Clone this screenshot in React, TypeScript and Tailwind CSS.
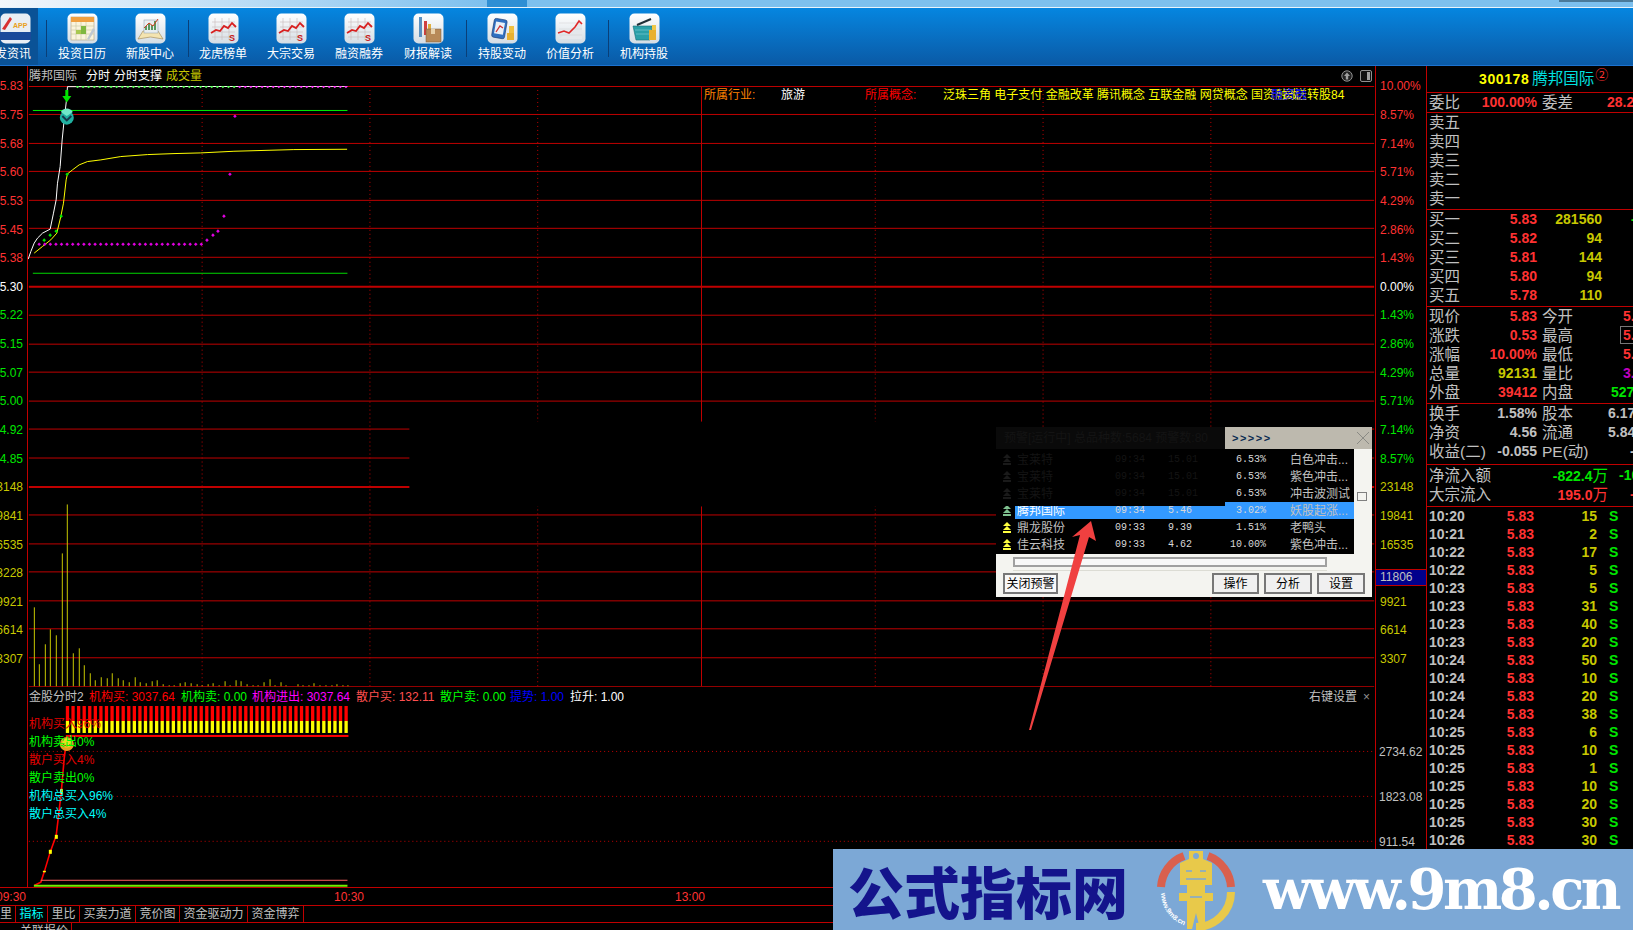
const RED = "#c00000";

const priceLine = [[82,568],[90,545],[100,520],[110,505],[125,490],[148,478],[158,430],[166,390],[170,340],[178,290],[184,210],[190,150],[197,90],[200,50],[1040,49]];
const avgLine = [[100,550],[125,530],[150,510],[168,490],[180,440],[188,400],[196,330],[200,312],[215,300],[235,285],[260,275],[300,270],[360,260],[440,254],[520,251],[600,249],[700,244],[880,239],[1040,238]];
const volBars = [[100,384],[115,555],[133,495],[148,450],[166,468],[184,222],[199,75],[217,522],[235,507],[250,558],[268,582],[283,603],[301,594],[319,597],[334,582],[352,597],[367,603],[385,609],[403,594],[418,609],[436,612],[454,606],[469,603],[487,615],[503,618],[520,618],[538,612],[553,609],[571,612],[589,615],[604,618],[622,615],[637,612],[655,618],[673,606],[688,618],[706,603],[721,606],[739,615],[757,618],[772,618],[790,609],[808,600],[823,618],[841,609],[856,618],[892,615],[907,618],[925,618],[940,612],[958,618],[975,618],[992,618],[1009,615],[1027,618],[1042,618]];
const gridYs = [86.5,114.5,143.5,171.5,200.5,228.5,257.5,315.5,344.5,372.5,401.5,429.5,458.5,515.5,544.5,572.5,601.5,629.5,658.5,687.5];
const dottedXs = [201.5,369.5,537.5,875.5,1043.5,1211.5];
const pinkTail = [[619,511],[637,496],[652,484],[670,439],[688,313],[703,139]];
const greenDots = [[130,511],[148,496],[166,484],[181,439],[199,313]];
const indLine = [[100,620],[120,610],[130,580],[148,520],[166,470],[172,420],[180,350],[183,320],[190,240],[195,200]];

const toPts = (a: number[][]) => a.map(([x, y]) => `${x / 3},${y / 3 + 70}`).join(" ");

const leftAxis = [
  ["5.83","text-[#ff3232]"],["5.75","text-[#ff3232]"],["5.68","text-[#ff3232]"],["5.60","text-[#ff3232]"],["5.53","text-[#ff3232]"],["5.45","text-[#ff3232]"],["5.38","text-[#ff3232]"],
  ["5.30","text-white"],
  ["5.22","text-[#00e600]"],["5.15","text-[#00e600]"],["5.07","text-[#00e600]"],["5.00","text-[#00e600]"],["4.92","text-[#00e600]"],["4.85","text-[#00e600]"],
  ["23148","text-[#c8c800]"],["19841","text-[#c8c800]"],["16535","text-[#c8c800]"],["13228","text-[#c8c800]"],["9921","text-[#c8c800]"],["6614","text-[#c8c800]"],["3307","text-[#c8c800]"],
];
const rightAxis = [
  ["10.00%","text-[#ff3232]"],["8.57%","text-[#ff3232]"],["7.14%","text-[#ff3232]"],["5.71%","text-[#ff3232]"],["4.29%","text-[#ff3232]"],["2.86%","text-[#ff3232]"],["1.43%","text-[#ff3232]"],
  ["0.00%","text-white"],
  ["1.43%","text-[#00e600]"],["2.86%","text-[#00e600]"],["4.29%","text-[#00e600]"],["5.71%","text-[#00e600]"],["7.14%","text-[#00e600]"],["8.57%","text-[#00e600]"],
  ["23148","text-[#c8c800]"],["19841","text-[#c8c800]"],["16535","text-[#c8c800]"],["","text-[#c8c800]"],["9921","text-[#c8c800]"],["6614","text-[#c8c800]"],["3307","text-[#c8c800]"],
];

const ticks = [["10:20",15],["10:21",2],["10:22",17],["10:22",5],["10:23",5],["10:23",31],["10:23",40],["10:23",20],["10:24",50],["10:24",10],["10:24",20],["10:24",38],["10:25",6],["10:25",10],["10:25",1],["10:25",10],["10:25",20],["10:25",30],["10:26",30]];

function Tile({ children }: { children: React.ReactNode }) {
  return (
    <svg width="31" height="31" viewBox="0 0 31 31">
      <defs>
        <linearGradient id="tile" x1="0" y1="0" x2="0" y2="1">
          <stop offset="0" stopColor="#ffffff" />
          <stop offset="1" stopColor="#d4dde4" />
        </linearGradient>
      </defs>
      <rect x="0.5" y="0.5" width="30" height="30" rx="5" fill="url(#tile)" />
      {children}
    </svg>
  );
}

function ChartS() {
  return (
    <Tile>
      <g stroke="#c8b8b8" strokeWidth="0.6">
        <path d="M4 9H27M4 14H27M4 19H27M4 24H27M7 5V27M14 5V27M21 5V27" />
      </g>
      <path d="M3 20L8 17L12 18L16 13L20 15L24 10L28 14" fill="none" stroke="#d82020" strokeWidth="1.8" />
      <text x="21" y="28" fontSize="9" fontWeight="700" fill="#c81818" fontFamily="Liberation Sans">S</text>
    </Tile>
  );
}

const icons: Record<string, React.ReactNode> = {
  calendar: (
    <Tile>
      <rect x="4" y="4" width="23" height="23" fill="#fbf4dc" stroke="#b0a080" strokeWidth="0.6" />
      <rect x="4" y="4" width="23" height="5" fill="#f0a040" />
      <path d="M4 13H27M4 17H27M4 21H27M9 9V27M14 9V27M19 9V27" stroke="#c8c8a0" strokeWidth="0.6" />
      <rect x="14" y="13" width="5" height="8" fill="#80b840" />
      <rect x="9" y="17" width="5" height="4" fill="#a8c850" />
      <path d="M20 26L26 15L28 17L22 27Z" fill="#c0c8d0" />
    </Tile>
  ),
  book: (
    <Tile>
      <path d="M3 26L8 18H15.5L23 18L28 26L15.5 24Z" fill="#f4e4b0" stroke="#a89060" strokeWidth="0.7" />
      <rect x="9" y="7" width="14" height="13" fill="#e8eef0" stroke="#8898a8" strokeWidth="0.5" />
      <path d="M10 17V13H12V17ZM13 17V10H15V17ZM16 17V12H18V17ZM19 17V8H21V17Z" fill="#5a9860" />
      <path d="M9 15L14 10L18 13L23 6" fill="none" stroke="#d04020" strokeWidth="1" />
    </Tile>
  ),
  chart: <ChartS />,
  report: (
    <Tile>
      <rect x="6" y="4" width="3" height="20" fill="#5a90c0" />
      <rect x="11" y="8" width="3" height="14" fill="#d04040" />
      <rect x="15" y="11" width="3" height="8" fill="#e0b040" />
      <rect x="13" y="16" width="15" height="13" fill="#b88a58" stroke="#7a5a38" strokeWidth="0.5" />
      <rect x="18" y="16" width="4" height="5" fill="#e8d0a8" />
    </Tile>
  ),
  holding: (
    <Tile>
      <rect x="6" y="6" width="13" height="19" rx="2" transform="rotate(10 12 15)" fill="#3070c0" stroke="#183870" strokeWidth="0.6" />
      <rect x="8" y="9" width="9" height="12" transform="rotate(10 12 15)" fill="#e8f0f8" />
      <path d="M9 19L13 13L16 15" fill="none" stroke="#d03030" strokeWidth="1.3" />
      <rect x="20" y="20" width="7" height="7" fill="#e8b030" />
      <rect x="22" y="13" width="5" height="7" fill="#f0c040" />
    </Tile>
  ),
  value: (
    <Tile>
      <path d="M4 26H27V8L4 26Z" fill="#e4e8ec" />
      <path d="M4 22H27M4 16H27M4 10H27" stroke="#d0d0d0" strokeWidth="0.5" />
      <path d="M3 20L9 18L14 20L20 14L24 8L27 11" fill="none" stroke="#e02828" strokeWidth="1.6" />
    </Tile>
  ),
  basket: (
    <Tile>
      <path d="M4 13H23L21 27H7Z" fill="#2aa0a8" stroke="#157078" strokeWidth="0.6" />
      <path d="M8 12L22 6" stroke="#203038" strokeWidth="2" />
      <path d="M6 17H22M7 21H21" stroke="#88d0d8" strokeWidth="0.6" />
      <rect x="20" y="17" width="7" height="10" fill="#e8b030" />
      <rect x="23" y="12" width="4" height="5" fill="#f0c848" />
    </Tile>
  ),
};

function Dot({ x, y, fill }: { x: number; y: number; fill: string }) {
  return <path d={`M${x} ${y - 1.8}L${x + 1.8} ${y}L${x} ${y + 1.8}L${x - 1.8} ${y}Z`} fill={fill} />;
}

function ToolItem({ icon, label, className = "" }: { icon: string; label: string; className?: string }) {
  return (
    <div className={`flex flex-col items-center w-[68px] pt-[5px] ${className}`}>
      {icons[icon]}
      <div className="mt-[2px] h-[17px] leading-[17px] text-[12px] text-white whitespace-nowrap">{label}</div>
    </div>
  );
}

function Sep({ className = "" }: { className?: string }) {
  return <div className={`w-px h-[37px] mt-[12px] bg-[#0a3f78] ${className}`} />;
}

const cjkRow = "text-[15.5px] text-[#c0c0c0] leading-[19px]";
const numBold = "text-[14px] font-bold leading-[19px]";

function StatRow({ a, v, vc, b, w, wc, pad, boxed }: { a: string; v: string; vc: string; b: string; w: string; wc: string; pad: string; boxed?: boolean }) {
  return (
    <div className="flex h-[19px] items-center whitespace-nowrap">
      <div className={`w-[40px] shrink-0 ${cjkRow}`}>{a}</div>
      <div className={`w-[68px] shrink-0 text-right ${numBold} ${vc}`}>{v}</div>
      <div className={`ml-[5px] w-[31px] shrink-0 ${cjkRow}`}>{b}</div>
      <div className={`shrink-0 ${pad} ${numBold} ${wc}`}>
        {boxed ? <span className="border-l border-y border-[#777] pl-[2px] -ml-[3px] leading-[16px] inline-block">{w}</span> : w}
      </div>
    </div>
  );
}

function QuoteRow({ a, p, v, extra }: { a: string; p?: string; v?: string; extra?: boolean }) {
  return (
    <div className="flex h-[19px] items-center whitespace-nowrap">
      <div className={`w-[40px] shrink-0 ${cjkRow}`}>{a}</div>
      <div className={`w-[68px] shrink-0 text-right ${numBold} text-[#ff3232]`}>{p}</div>
      <div className={`w-[65px] shrink-0 text-right ${numBold} text-[#c8c800]`}>{v}</div>
      {extra && <div className={`pl-[29px] shrink-0 ${numBold} text-[#00e600]`}>-</div>}
    </div>
  );
}

function RightPanel() {
  return (
    <div className="w-[207px] shrink-0 flex flex-col overflow-hidden border-l border-[#c00000]">
      <div className="h-[27px] shrink-0 border-b border-[#c00000] flex items-center pl-[52px] whitespace-nowrap">
        <span className="text-[14px] font-bold text-[#ffff00] tracking-[0.6px]">300178</span>
        <span className="ml-[3px] text-[15.5px] text-[#00e0e0]">腾邦国际</span>
        <span className="ml-[1px] -mt-[8px] text-[13px] text-[#ff3232]">②</span>
      </div>
      <div className="h-[20px] shrink-0 border-b border-[#c00000] pl-[2px]">
        <StatRow a="委比" v="100.00%" vc="text-[#ff3232]" b="委差" w="28.2万" wc="text-[#ff3232]" pad="pl-[34px]" />
      </div>
      <div className="h-[97px] shrink-0 border-b border-[#c00000] pl-[2px]">
        {["卖五", "卖四", "卖三", "卖二", "卖一"].map((s) => (
          <QuoteRow key={s} a={s} />
        ))}
      </div>
      <div className="h-[97px] shrink-0 border-b border-[#c00000] pl-[2px]">
        <QuoteRow a="买一" p="5.83" v="281560" extra />
        <QuoteRow a="买二" p="5.82" v="94" />
        <QuoteRow a="买三" p="5.81" v="144" />
        <QuoteRow a="买四" p="5.80" v="94" />
        <QuoteRow a="买五" p="5.78" v="110" />
      </div>
      <div className="h-[97px] shrink-0 border-b border-[#c00000] pl-[2px]">
        <StatRow a="现价" v="5.83" vc="text-[#ff3232]" b="今开" w="5.38" wc="text-[#ff3232]" pad="pl-[50px]" />
        <StatRow a="涨跌" v="0.53" vc="text-[#ff3232]" b="最高" w="5.83" wc="text-[#ff3232]" pad="pl-[50px]" boxed />
        <StatRow a="涨幅" v="10.00%" vc="text-[#ff3232]" b="最低" w="5.38" wc="text-[#ff3232]" pad="pl-[50px]" />
        <StatRow a="总量" v="92131" vc="text-[#c8c800]" b="量比" w="3.25" wc="text-[#c000c0]" pad="pl-[50px]" />
        <StatRow a="外盘" v="39412" vc="text-[#ff3232]" b="内盘" w="52719" wc="text-[#00e600]" pad="pl-[38px]" />
      </div>
      <div className="h-[61px] shrink-0 border-b border-[#c00000] pl-[2px]">
        <StatRow a="换手" v="1.58%" vc="text-[#c0c0c0]" b="股本" w="6.17亿" wc="text-[#c0c0c0]" pad="pl-[35px]" />
        <StatRow a="净资" v="4.56" vc="text-[#c0c0c0]" b="流通" w="5.84亿" wc="text-[#c0c0c0]" pad="pl-[35px]" />
        <StatRow a="收益(二)" v="-0.055" vc="text-[#c0c0c0]" b="PE(动)" w="-" wc="text-[#c0c0c0]" pad="pl-[57px]" />
      </div>
      <div className="h-[42px] shrink-0 border-b border-[#c00000] pl-[2px] pt-[1px]">
        <div className="flex h-[19px] items-center whitespace-nowrap">
          <div className={`w-[70px] shrink-0 ${cjkRow}`}>净流入额</div>
          <div className={`w-[109px] shrink-0 text-right ${numBold} text-[#00e600]`}>-822.4<span className="text-[15.5px] font-normal">万</span></div>
          <div className={`pl-[11px] shrink-0 ${numBold} text-[#00e600]`}>-10</div>
        </div>
        <div className="flex h-[19px] items-center whitespace-nowrap">
          <div className={`w-[70px] shrink-0 ${cjkRow}`}>大宗流入</div>
          <div className={`w-[109px] shrink-0 text-right ${numBold} text-[#ff3232]`}>195.0<span className="text-[15.5px] font-normal">万</span></div>
          <div className={`pl-[22px] shrink-0 ${numBold} text-[#ff3232]`}>-</div>
        </div>
      </div>
      <div className="pl-[2px]">
        {ticks.map(([t, v], i) => (
          <div key={i} className="flex h-[18px] items-center whitespace-nowrap text-[14px] font-bold">
            <div className="w-[50px] shrink-0 text-[#c0c0c0]">{t}</div>
            <div className="w-[55px] shrink-0 text-right text-[#ff3232]">5.83</div>
            <div className="w-[63px] shrink-0 text-right text-[#c8c800]">{v}</div>
            <div className="pl-[12px] shrink-0 text-[#00e600]">S</div>
          </div>
        ))}
      </div>
    </div>
  );
}

function PriceChart() {
  return (
    <svg className="block" width="1347" height="602" viewBox="28 86 1347 602">
      {gridYs.map((y) => (
        <line key={y} x1="28" x2="1375" y1={y} y2={y} stroke={RED} />
      ))}
      <line x1="28" x2="1375" y1="287" y2="287" stroke={RED} strokeWidth="2" />
      <line x1="28" x2="1375" y1="487.5" y2="487.5" stroke={RED} strokeWidth="2" />
      {dottedXs.map((x) => (
        <line key={x} x1={x} x2={x} y1="86" y2="687" stroke={RED} strokeDasharray="1 3" />
      ))}
      <line x1="701.5" x2="701.5" y1="86" y2="687" stroke={RED} />
      <rect x="409" y="422" width="590" height="85" fill="#000" />
      <line x1="32" x2="347" y1="110.5" y2="110.5" stroke="#00f000" />
      <line x1="32" x2="347" y1="273.5" y2="273.5" stroke="#00d800" />
      <polyline points={toPts(avgLine)} fill="none" stroke="#ffff00" strokeWidth="1" />
      <polyline points={toPts(priceLine)} fill="none" stroke="#ffffff" strokeWidth="1" />
      {Array.from({ length: 30 }, (_, i) => 38.3 + i * 5.6).map((x) => (
        <Dot key={x} x={x} y={244.5} fill="#e000e0" />
      ))}
      {pinkTail.map(([x, y]) => (
        <Dot key={x} x={x / 3} y={y / 3 + 70} fill="#e000e0" />
      ))}
      {greenDots.map(([x, y]) => (
        <Dot key={x} x={x / 3} y={y / 3 + 70} fill="#00e600" />
      ))}
      {Array.from({ length: 49 }, (_, i) => 76.7 + i * 5.6).map((x) => (
        <Dot key={x} x={x} y={86.5} fill={x < 237 ? "#60ff60" : "#ff40ff"} />
      ))}
      <path d="M64.5 90H67.5V96H70.5L66 102.5L61.5 96H64.5Z" fill="#00e600" />
      <circle cx="66" cy="117.7" r="7" fill="#20b0a0" />
      <path d="M60 112A7 7 0 0 1 72 112L66 116Z" fill="#70e8c8" />
      <path d="M61.5 116L66 120.5L70.5 116" fill="none" stroke="#16384a" strokeWidth="2" />
      {volBars.map(([x, y]) => (
        <line key={x} x1={Math.round(x / 3) + 0.5} x2={Math.round(x / 3) + 0.5} y1={y / 3 + 480} y2="687" stroke="#c8c800" />
      ))}
    </svg>
  );
}

function IndicatorChart() {
  return (
    <svg className="block" width="1347" height="181" viewBox="28 707 1347 181">
      {[752.5, 797.5, 842.5].map((y) => (
        <line key={y} x1="28" x2="1375" y1={y} y2={y} stroke={RED} strokeDasharray="1 3" />
      ))}
      {Array.from({ length: 51 }, (_, i) => 65 + i * 5.58).map((x) => (
        <g key={x}>
          <rect x={x} y="707" width="3.3" height="15" fill="#ff0000" />
          <rect x={x} y="722" width="3.3" height="12" fill="#ffff00" />
        </g>
      ))}
      <rect x="65" y="736" width="283" height="2" fill="#ff0000" />
      <polyline points={indLine.map(([x, y]) => `${x / 3},${y / 3 + 680}`).join(" ")} fill="none" stroke="#ff0000" strokeWidth="1.6" />
      <rect x="42" y="872" width="3" height="1.5" fill="#ffff00" />
      <rect x="48" y="851" width="3" height="4" fill="#ffff00" />
      <rect x="54" y="836" width="3" height="4" fill="#ffff00" />
      <rect x="59.5" y="790" width="2.5" height="5" fill="#ffff00" />
      <circle cx="66" cy="745" r="7" fill="#e8a020" />
      <circle cx="66" cy="744" r="4.5" fill="#e8e020" />
      <path d="M62 745Q66 749 70 745" fill="none" stroke="#806000" />
      <line x1="40" x2="347" y1="881.5" y2="881.5" stroke="#ff6060" />
      <line x1="33" x2="347" y1="887" y2="887" stroke="#70f000" strokeWidth="2" />
    </svg>
  );
}

function Dialog() {
  const rows = [
    ["宝莱特", "09:34", "15.01", "6.53%", "白色冲击...", true],
    ["宝莱特", "09:34", "15.01", "6.53%", "紫色冲击...", true],
    ["宝莱特", "09:34", "15.01", "6.53%", "冲击波测试", true],
    ["腾邦国际", "09:34", "5.46", "3.02%", "妖股起涨...", false],
    ["鼎龙股份", "09:33", "9.39", "1.51%", "老鸭头", false],
    ["佳云科技", "09:33", "4.62", "10.00%", "紫色冲击...", false],
  ] as const;
  const dim = "text-[#141414]";
  return (
    <div className="absolute left-[996px] top-[427px] w-[376px] h-[170px] bg-[#f4f4f0] flex flex-col text-[12px]">
      <div className="flex h-[22px] shrink-0">
        <div className={`w-[229px] bg-[#0a0a0a] pl-[8px] leading-[22px] whitespace-nowrap overflow-hidden ${dim}`}>预警[运行中] 总品种数:5684 预警数:80</div>
        <div className="flex-1 bg-[#bdb9ae] flex items-center justify-between pl-[7px] pr-[2px]">
          <span className="font-bold text-[#0a2a50] tracking-[1.5px] text-[11px]">&gt;&gt;&gt;&gt;&gt;</span>
          <svg width="14" height="14" viewBox="0 0 14 14"><path d="M1 1L13 13M13 1L1 13" stroke="#8a8a84" fill="none" /></svg>
        </div>
      </div>
      <div className="flex h-[105px] shrink-0">
        <div className="relative w-[358px] bg-black pt-[2px]">
          {rows.map(([name, t, p, pct, s], i) => (
            <div key={i} className="flex h-[17px] items-center whitespace-nowrap">
              <svg className="shrink-0" width="19" height="11" viewBox="0 0 19 11">
                <path d="M11 0L15 4H7ZM11 4L15 8H7ZM7 9H15V11H7Z" fill={i < 3 ? "#1a1a1a" : i === 3 ? "#7fc08f" : "#ffff40"} />
              </svg>
              <div className={`flex flex-1 h-full items-center ${i === 3 ? "bg-[#3399ff]" : ""}`}>
                <div className={`w-[100px] shrink-0 pl-[2px] ${i < 3 ? dim : i === 3 ? "text-white" : "text-[#c0c0c0]"}`}>{name}</div>
                <div className={`w-[53px] shrink-0 font-['Liberation_Mono',monospace] text-[10px] ${i < 3 ? dim : "text-[#d8d8d8]"}`}>{t}</div>
                <div className={`w-[62px] shrink-0 font-['Liberation_Mono',monospace] text-[10px] ${i < 3 ? dim : "text-[#d8d8d8]"}`}>{p}</div>
                <div className="w-[36px] shrink-0 text-right font-['Liberation_Mono',monospace] text-[10px] text-[#d8d8d8]">{pct}</div>
                <div className="pl-[24px] text-[#c0c0c0]">{s}</div>
              </div>
            </div>
          ))}
          <div className="absolute left-0 top-[53px] w-[229px] h-[4px] bg-black" />
        </div>
        <div className="flex-1 pt-[43px] pl-[3px]">
          <div className="w-[10px] h-[9px] border border-[#808080]" />
        </div>
      </div>
      <div className="ml-[17px] mt-[3px] w-[314px] h-[10px] shrink-0 border-2 border-[#a0a0a0] bg-[#f8f8f8]" />
      <div className="ml-[17px] mt-[3px] w-[314px] h-px shrink-0 bg-[#dcdcd4]" />
      <div className="flex mt-[2px] pl-[7px] pr-[7px] h-[21px] shrink-0">
        <button className="w-[55px] border-2 border-[#777] text-black bg-[#f8f8f8]">关闭预警</button>
        <button className="ml-auto w-[47px] border-2 border-[#777] text-black bg-[#f0f0f0]">操作</button>
        <button className="ml-[5px] w-[48px] border-2 border-[#777] text-black bg-[#f0f0f0]">分析</button>
        <button className="ml-[5px] w-[48px] border-2 border-[#777] text-black bg-[#f0f0f0]">设置</button>
      </div>
    </div>
  );
}

function Banner() {
  return (
    <div className="absolute left-[833px] top-[849px] w-[800px] h-[81px] bg-[#7ca8d6] flex items-center overflow-hidden">
      <div className="ml-[15px] w-[308px] text-[56px] leading-[81px] font-black text-[#14148c] font-['Noto_Sans_CJK_SC',sans-serif] whitespace-nowrap">公式指标网</div>
      <svg className="shrink-0" width="80" height="81" viewBox="0 0 80 81">
        <path d="M5 38A35 35 0 0 1 28 7" fill="none" stroke="#d9604e" strokeWidth="8" />
        <path d="M75 38A35 35 0 0 0 52 7" fill="none" stroke="#d9604e" strokeWidth="8" />
        <path d="M75 43A35 35 0 0 1 40 78" fill="none" stroke="#e8c94a" strokeWidth="8" />
        <path d="M33 2H47V10L56 14V36H49V44H57V52H49V80H44L40 64L36 80H31V52H23V44H31V36H24V14L33 10Z" fill="#e8c94a" />
        <circle cx="40" cy="7" r="3" fill="#7ca8d6" />
        <path d="M30 22H36M44 22H50M30 30H50M34 48H46" stroke="#7ca8d6" strokeWidth="1.5" />
        <defs><path id="ring" d="M5 44A35 35 0 0 0 30 77" /></defs>
        <text fontSize="7" fill="#fff" fontFamily="Liberation Sans" fontWeight="700"><textPath href="#ring">www.9m8.cn</textPath></text>
      </svg>
      <div className="ml-[27px] text-[56px] font-bold text-white font-['DejaVu_Serif',serif] tracking-[-3.5px] whitespace-nowrap leading-[81px]">www.9m8.cn</div>
    </div>
  );
}

export default function App() {
  return (
    <div className="relative w-[1633px] h-[930px] overflow-hidden bg-black flex flex-col font-['Liberation_Sans','Noto_Sans_CJK_SC',sans-serif]">
      <div className="h-[8px] shrink-0 flex border-b border-[#e8f4fc] bg-gradient-to-r from-[#f4f8fb] via-[#7cc0ee] via-30% to-[#7cc0ee]">
        <div className="ml-[487px] w-[40px] bg-[#2e8fd4]" />
        <div className="ml-auto w-[74px] h-[2px] bg-[#4a7a9a]" />
      </div>

      <div className="h-[58px] shrink-0 flex bg-gradient-to-b from-[#0586e0] to-[#0a5aa6] border-b border-[#1c72d0]">
        <div className="w-[38px] shrink-0 bg-[#0a5296] flex flex-col items-end pr-[7px] pt-[5px] overflow-hidden">
          <svg className="shrink-0" width="31" height="31" viewBox="0 0 31 31">
            <rect x="0.5" y="0.5" width="30" height="30" rx="5" fill="#e8eef4" />
            <path d="M2 16L10 4L12 6L5 17Z" fill="#d83030" />
            <text x="13" y="15" fontSize="7" fill="#e8a020" fontFamily="Liberation Sans" fontWeight="700">APP</text>
            <rect x="0" y="19" width="31" height="8" fill="#1a4a9a" />
          </svg>
          <div className="mt-[2px] h-[17px] leading-[17px] text-[12px] text-white whitespace-nowrap">开发资讯</div>
        </div>
        <Sep className="ml-[8px]" />
        <ToolItem icon="calendar" label="投资日历" className="ml-[1px]" />
        <ToolItem icon="book" label="新股中心" />
        <Sep className="ml-[4px]" />
        <ToolItem icon="chart" label="龙虎榜单" />
        <ToolItem icon="chart" label="大宗交易" />
        <ToolItem icon="chart" label="融资融券" />
        <ToolItem icon="report" label="财报解读" className="ml-[1px]" />
        <Sep className="ml-[4px]" />
        <ToolItem icon="holding" label="持股变动" className="ml-[1px]" />
        <ToolItem icon="value" label="价值分析" />
        <Sep className="ml-[4px]" />
        <ToolItem icon="basket" label="机构持股" className="ml-[1px]" />
      </div>

      <div className="flex flex-1 min-h-0">
        <div className="w-[1426px] shrink-0 flex flex-col">
          <div className="flex h-[822px] shrink-0 border-b border-[#c00000]">
            <div className="w-[27px] shrink-0 pt-[6px] overflow-hidden">
              {leftAxis.map(([t, c], i) => (
                <div key={i} className={`h-[28.65px] flex items-center justify-end pr-[4px] text-[12px] ${c}`}>{t}</div>
              ))}
            </div>

            <div className="w-[1349px] shrink-0 border-x border-[#c00000] flex flex-col relative">
              <div className="h-[20px] shrink-0 flex items-center text-[12px] whitespace-nowrap">
                <span className="ml-[1px] w-[57px] text-[#c0c0c0]">腾邦国际</span>
                <span className="w-[28px] text-white">分时</span>
                <span className="w-[52px] text-white">分时支撑</span>
                <span className="text-[#c8c800]">成交量</span>
                <div className="ml-auto mr-[3px] flex items-center gap-[7px]">
                  <svg width="12" height="12" viewBox="0 0 12 12">
                    <circle cx="6" cy="6" r="5.2" fill="#222" stroke="#909090" />
                    <path d="M6 2.5L9 6H7.2V9.5H4.8V6H3Z" fill="#a0a0a0" />
                  </svg>
                  <svg width="12" height="12" viewBox="0 0 12 12">
                    <rect x="0.5" y="0.5" width="11" height="11" rx="1.5" fill="#111" stroke="#909090" />
                    <rect x="7" y="2" width="3" height="8" fill="#a0a0a0" />
                  </svg>
                </div>
              </div>
              <PriceChart />
              <div className="h-[19px] shrink-0 flex items-center text-[12px] whitespace-nowrap">
                <span className="ml-[1px] w-[60px] text-[#c0c0c0]">金股分时2</span>
                <span className="w-[92px] text-[#ff0000]">机构买: 3037.64</span>
                <span className="w-[71px] text-[#00ff00]">机构卖: 0.00</span>
                <span className="w-[104px] text-[#ff00ff]">机构进出: 3037.64</span>
                <span className="w-[84px] text-[#ff5050]">散户买: 132.11</span>
                <span className="w-[70px] text-[#00ff00]">散户卖: 0.00</span>
                <span className="w-[60px] text-[#0000ff]">提势: 1.00</span>
                <span className="text-white">拉升: 1.00</span>
                <span className="ml-auto w-[54px] text-[#c0c0c0]">右键设置</span>
                <span className="w-[12px] text-[#909090]">×</span>
              </div>
              <IndicatorChart />
              <div className="absolute left-[1px] top-[649px] text-[12px] leading-[18px] whitespace-nowrap">
                <div className="text-[#e00000]">机构买入96%</div>
                <div className="text-[#00ff00]">机构卖出0%</div>
                <div className="text-[#e00000]">散户买入4%</div>
                <div className="text-[#00ff00]">散户卖出0%</div>
                <div className="text-[#00ffff]">机构总买入96%</div>
                <div className="text-[#00ffff]">散户总买入4%</div>
              </div>
              <div className="absolute top-[21px] left-[676px] flex text-[12px] leading-[16px] whitespace-nowrap">
                <span className="w-[77px] text-[#ff8000]">所属行业:</span>
                <span className="w-[84px] text-white">旅游</span>
                <span className="w-[78px] text-[#ff0000]">所属概念:</span>
                <span className="relative text-[#ffff00]">
                  泛珠三角 电子支付 金融改革 腾讯概念 互联金融 网贷概念 国资融改
                  <span className="absolute left-[340px] top-0">高送转股84</span>
                  <span className="absolute left-[328px] top-0 text-[#0000ff]">融资融</span>
                </span>
              </div>
            </div>

            <div className="w-[50px] shrink-0 pt-[6px] relative">
              {rightAxis.map(([t, c], i) => (
                <div key={i} className={`h-[28.65px] flex items-center pl-[4px] text-[12px] ${c}`}>{t}</div>
              ))}
              <div className="mt-[56px] pl-[3px] text-[12px] text-[#c0c0c0]">
                <div className="h-[45px] flex items-center">2734.62</div>
                <div className="h-[45px] flex items-center">1823.08</div>
                <div className="h-[45px] flex items-center">911.54</div>
              </div>
              <div className="absolute left-0 top-[503px] w-full h-[17px] bg-[#00008c] border-y border-[#c00000] pl-[4px] text-[12px] leading-[15px] text-[#c0c0c0]">11806</div>
            </div>
          </div>

          <div className="h-[18px] shrink-0 flex items-center text-[12px] text-[#ff3232] border-b border-[#c00000]">
            <span className="-ml-[4px] w-[338px]">09:30</span>
            <span className="w-[341px]">10:30</span>
            <span>13:00</span>
          </div>
          <div className="h-[17px] shrink-0 flex text-[12px] leading-[16px] text-[#c0c0c0] border-b border-[#c00000] whitespace-nowrap">
            <div className="w-[16px] pr-[3px] text-right border-r border-[#c00000]">里</div>
            <div className="w-[32px] text-center border-r border-[#c00000] text-[#00ffff]">指标</div>
            <div className="w-[32px] text-center border-r border-[#c00000]">里比</div>
            <div className="w-[56px] text-center border-r border-[#c00000]">买卖力道</div>
            <div className="w-[44px] text-center border-r border-[#c00000]">竞价图</div>
            <div className="w-[68px] text-center border-r border-[#c00000]">资金驱动力</div>
            <div className="w-[56px] text-center border-r border-[#c00000]">资金博弈</div>
          </div>
          <div className="flex text-[12px] leading-[16px] text-[#c0c0c0]">
            <div className="w-[72px] pl-[20px] border-r border-[#c00000] whitespace-nowrap overflow-hidden">关联报价</div>
          </div>
        </div>

        <RightPanel />
      </div>

      <Dialog />

      <svg className="absolute left-[1020px] top-[515px]" width="85" height="220" viewBox="0 0 85 220">
        <path d="M9 215L60 20L52 22L71 6L76 26L69 22L11 215Z" fill="#f04040" />
      </svg>

      <Banner />
    </div>
  );
}
